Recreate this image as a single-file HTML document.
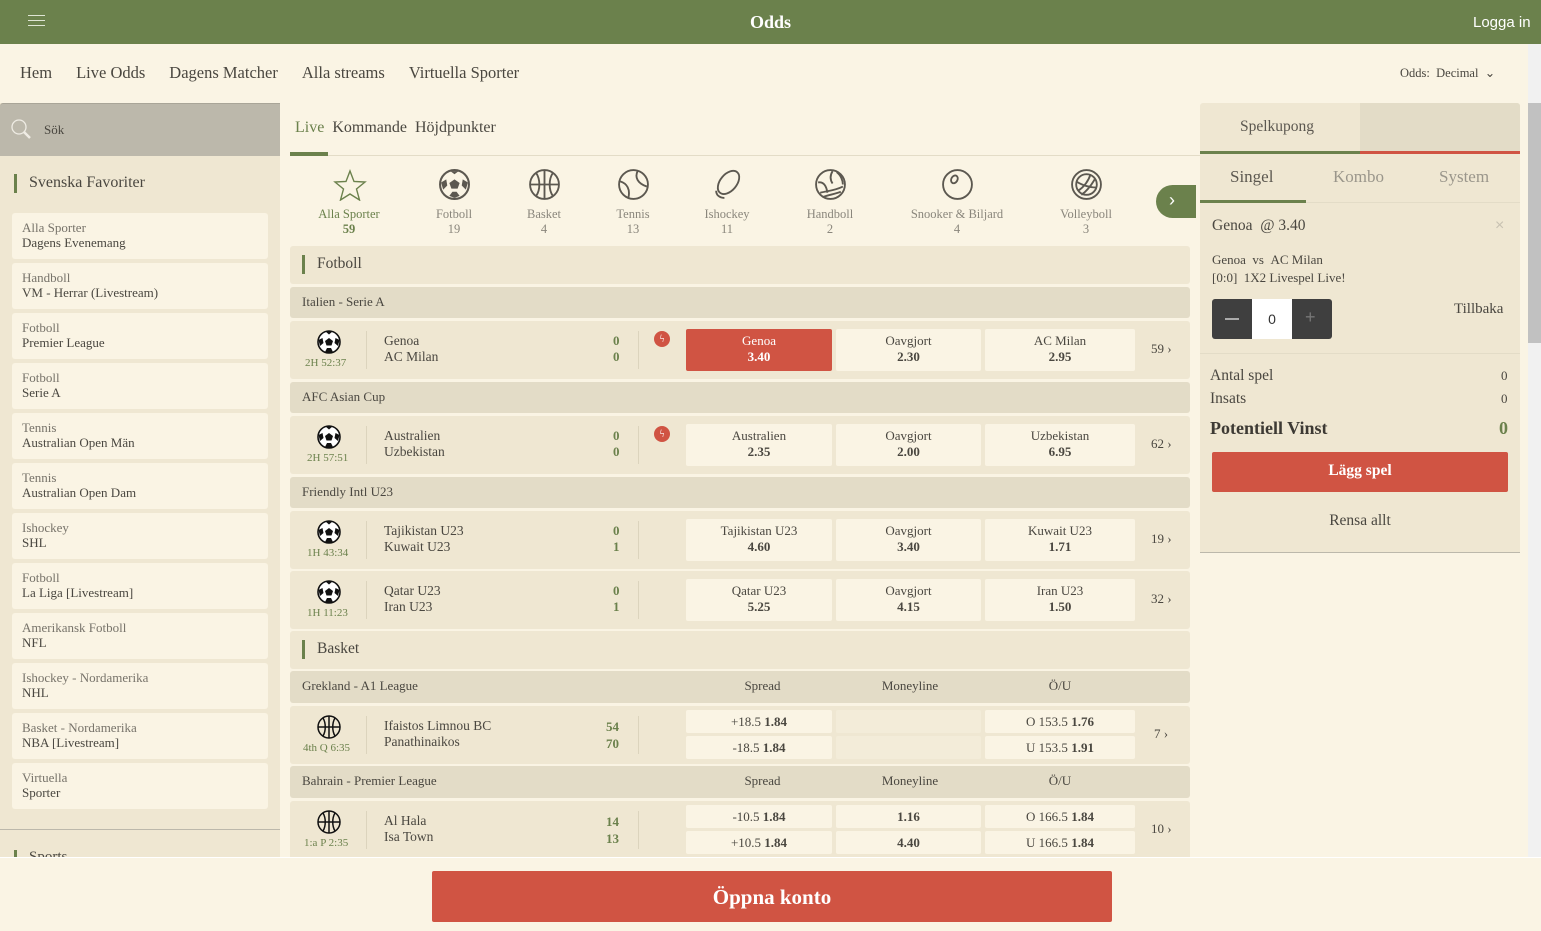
<!DOCTYPE html>
<html><head><meta charset="utf-8"><style>
*{box-sizing:border-box;margin:0;padding:0}
body{width:1541px;height:931px;overflow:hidden;background:#faf4e4;font-family:"Liberation Serif","DejaVu Serif",serif;color:#4a4740;position:relative}
.a{position:absolute}
.hdr{left:0;top:0;width:1541px;height:44px;background:#6b814c}
.nav span{margin-right:24px}
.card{left:12px;width:256px;height:46px;background:#faf4e4;border-radius:3px;padding:7px 10px;font-size:13px;line-height:15px}
.card .t{color:#77736a}
.row{left:290px;width:900px;border-radius:3px}
.sec{background:#efe7d2}
.lg{background:#e3dcc7;font-size:13px;color:#4a4740;padding-left:12px}
.m{background:#efe7d2}
.odd{position:absolute;background:#faf4e4;border-radius:2px;text-align:center;font-size:13px;line-height:16px;color:#4a4740}
.odd b{font-weight:bold}
.sp{text-align:center;font-size:12.5px;color:#8a867c;width:110px}
</style></head><body>
<div class="a hdr"></div>
<div class="a" style="left:28px;top:15px;width:17px;height:11px;border-top:1px solid #dfe5d4;border-bottom:1px solid #dfe5d4"></div>
<div class="a" style="left:28px;top:20px;width:17px;height:1px;background:#dfe5d4"></div>
<div class="a" style="left:0;width:1541px;top:12px;text-align:center;color:#fff;font-weight:bold;font-size:18px">Odds</div>
<div class="a" style="left:1473px;top:14px;color:#fff;font-family:'Liberation Sans',sans-serif;font-size:15px">Logga in</div>
<div class="a nav" style="left:20px;top:63px;font-size:16.5px;color:#4a4740"><span>Hem</span><span>Live Odds</span><span>Dagens Matcher</span><span>Alla streams</span><span>Virtuella Sporter</span></div>
<div class="a" style="left:1400px;top:65px;font-size:12.5px;color:#4a4740">Odds:&nbsp; Decimal &nbsp;⌄</div>

<!-- sidebar -->
<div class="a" style="left:0;top:103px;width:280px;height:760px;background:#efe7d2"></div>
<div class="a" style="left:0;top:103px;width:280px;height:53px;background:#bcb8ab;border-top:1px solid #a9a598;border-radius:3px 0 0 0"></div>
<svg class="a" style="left:11px;top:119px" width="22" height="22" viewBox="0 0 22 22"><circle cx="8" cy="8" r="7" fill="none" stroke="#efece4" stroke-width="1.3"/><path d="M13 13l6 6" stroke="#efece4" stroke-width="2.5"/></svg>
<div class="a" style="left:44px;top:122px;font-size:13px;color:#4a4740">Sök</div>
<div class="a" style="left:14px;top:174px;width:3px;height:19px;background:#6b814c"></div>
<div class="a" style="left:29px;top:174px;font-size:16px">Svenska Favoriter</div>
<div class="a card" style="top:213px"><div class="t">Alla Sporter</div>Dagens Evenemang</div>
<div class="a card" style="top:263px"><div class="t">Handboll</div>VM - Herrar (Livestream)</div>
<div class="a card" style="top:313px"><div class="t">Fotboll</div>Premier League</div>
<div class="a card" style="top:363px"><div class="t">Fotboll</div>Serie A</div>
<div class="a card" style="top:413px"><div class="t">Tennis</div>Australian Open Män</div>
<div class="a card" style="top:463px"><div class="t">Tennis</div>Australian Open Dam</div>
<div class="a card" style="top:513px"><div class="t">Ishockey</div>SHL</div>
<div class="a card" style="top:563px"><div class="t">Fotboll</div>La Liga [Livestream]</div>
<div class="a card" style="top:613px"><div class="t">Amerikansk Fotboll</div>NFL</div>
<div class="a card" style="top:663px"><div class="t">Ishockey - Nordamerika</div>NHL</div>
<div class="a card" style="top:713px"><div class="t">Basket - Nordamerika</div>NBA [Livestream]</div>
<div class="a card" style="top:763px"><div class="t">Virtuella</div>Sporter</div>
<div class="a" style="left:0;top:829px;width:280px;height:1px;background:#bcb8ab"></div>
<div class="a" style="left:14px;top:850px;width:3px;height:10px;background:#6b814c"></div>
<div class="a" style="left:29px;top:849px;font-size:15px">Sports</div>

<!-- center tabs -->
<div class="a" style="left:295px;top:119px;font-size:16px"><span style="color:#6b814c">Live</span>&nbsp; Kommande&nbsp; Höjdpunkter</div>
<div class="a" style="left:290px;top:155px;width:910px;height:1px;background:#e3dcc7"></div>
<div class="a" style="left:290px;top:152px;width:38px;height:4px;background:#6b814c"></div>

<!-- sport icons -->
<svg class="a" style="left:333px;top:169px" width="34" height="32" viewBox="0 0 34 32"><path d="M17 2l4 10.5 11 .5-8.5 7 3 11L17 25l-9.5 6 3-11L2 13l11-.5z" fill="none" stroke="#6b814c" stroke-width="1.4"/></svg>
<div class="a sp" style="left:294px;top:207px;color:#6b814c">Alla Sporter<br><b>59</b></div>
<svg class="a" style="left:438px;top:168px" width="33" height="33" viewBox="0 0 32 32"><circle cx="16" cy="16" r="14" fill="none" stroke="#5c5850" stroke-width="2"/><path d="M16 11l5 3.5-2 5.5h-6l-2-5.5zM3 14l5-3 1 6-4 4zM29 14l-5-3-1 6 4 4zM11 27l3-4h4l3 4-5 2zM12 3l4 3 4-3" fill="#5c5850"/></svg>
<div class="a sp" style="left:399px;top:207px">Fotboll<br>19</div>
<svg class="a" style="left:528px;top:168px" width="33" height="33" viewBox="0 0 32 32"><g fill="none" stroke="#5c5850" stroke-width="1.8"><circle cx="16" cy="16" r="14"/><path d="M16 2v28M2 16h28M8 5c4 6 4 16 0 22M24 5c-4 6-4 16 0 22"/></g></svg>
<div class="a sp" style="left:489px;top:207px">Basket<br>4</div>
<svg class="a" style="left:617px;top:168px" width="33" height="33" viewBox="0 0 32 32"><g fill="none" stroke="#5c5850" stroke-width="1.8"><circle cx="16" cy="16" r="14"/><path d="M20 3c-3 6 0 12 9 15M3 13c7 2 10 8 8 16"/></g></svg>
<div class="a sp" style="left:578px;top:207px">Tennis<br>13</div>
<svg class="a" style="left:711px;top:168px" width="33" height="33" viewBox="0 0 32 32"><g fill="none" stroke="#5c5850" stroke-width="1.8"><ellipse cx="17" cy="14" rx="13" ry="8" transform="rotate(-50 17 14)"/><path d="M5 22c0 4 3 7 8 7"/></g></svg>
<div class="a sp" style="left:672px;top:207px">Ishockey<br>11</div>
<svg class="a" style="left:814px;top:168px" width="33" height="33" viewBox="0 0 32 32"><g fill="none" stroke="#5c5850" stroke-width="1.8"><circle cx="16" cy="16" r="14"/><path d="M6 24c8-2 14-2 22-6M9 28c6-2 12-3 17-5M4 14c5-1 8 3 9 10M18 3c-3 5-2 9 0 12M22 4c4 3 6 8 6 12"/></g></svg>
<div class="a sp" style="left:775px;top:207px">Handboll<br>2</div>
<svg class="a" style="left:941px;top:168px" width="33" height="33" viewBox="0 0 32 32"><g fill="none" stroke="#5c5850" stroke-width="1.8"><circle cx="16" cy="16" r="14"/><ellipse cx="13" cy="11" rx="3" ry="4" transform="rotate(30 13 11)"/></g></svg>
<div class="a sp" style="left:892px;top:207px;width:130px">Snooker &amp; Biljard<br>4</div>
<svg class="a" style="left:1070px;top:168px" width="33" height="33" viewBox="0 0 32 32"><g fill="none" stroke="#5c5850" stroke-width="1.8"><circle cx="16" cy="16" r="14"/><circle cx="16" cy="16" r="10"/><path d="M8 22c6-4 10-10 12-16M11 26c6-4 10-10 13-15M6 13c6 4 14 6 20 6"/></g></svg>
<div class="a sp" style="left:1031px;top:207px">Volleyboll<br>3</div>
<div class="a" style="left:1156px;top:185px;width:40px;height:33px;border-radius:17px 0 0 17px;background:#6b814c;color:#fff;font-size:18px;line-height:31px;padding-left:13px;font-family:'Liberation Sans',sans-serif">›</div>

<!-- rows -->
<div class="a row sec" style="top:246px;height:38px"></div>
<div class="a" style="left:302px;top:255px;width:3px;height:19px;background:#6b814c"></div>
<div class="a" style="left:317px;top:255px;font-size:15.5px">Fotboll</div>
<div class="a row lg" style="top:287px;height:31px;line-height:29px">Italien - Serie A</div>
<div class="a row m" style="top:321px;height:58px"></div>
<div class="a row lg" style="top:382px;height:31px;line-height:29px">AFC Asian Cup</div>
<div class="a row m" style="top:416px;height:58px"></div>
<div class="a row lg" style="top:477px;height:31px;line-height:29px">Friendly Intl U23</div>
<div class="a row m" style="top:511px;height:58px"></div>
<div class="a row m" style="top:571px;height:58px"></div>
<div class="a row sec" style="top:631px;height:38px"></div>
<div class="a" style="left:302px;top:640px;width:3px;height:19px;background:#6b814c"></div>
<div class="a" style="left:317px;top:640px;font-size:15.5px">Basket</div>
<div class="a row lg" style="top:671px;height:32px;line-height:30px">Grekland - A1 League</div>
<div class="a row m" style="top:706px;height:58px"></div>
<div class="a row lg" style="top:766px;height:32px;line-height:30px">Bahrain - Premier League</div>
<div class="a row m" style="top:801px;height:60px"></div>
<div class="a" style="left:740px;top:678px;width:45px;text-align:center;font-size:13px">Spread</div>
<div class="a" style="left:870px;top:678px;width:80px;text-align:center;font-size:13px">Moneyline</div>
<div class="a" style="left:1040px;top:678px;width:40px;text-align:center;font-size:13px">Ö/U</div>
<div class="a" style="left:740px;top:773px;width:45px;text-align:center;font-size:13px">Spread</div>
<div class="a" style="left:870px;top:773px;width:80px;text-align:center;font-size:13px">Moneyline</div>
<div class="a" style="left:1040px;top:773px;width:40px;text-align:center;font-size:13px">Ö/U</div>

<svg width="0" height="0" style="position:absolute"><defs>
<g id="fb"><circle cx="12" cy="12" r="11" fill="#fff" stroke="#111" stroke-width="1.6"/><path d="M12 8l4 3-1.5 4.5h-5L8 11zM1.5 10l4-2 1 5-3.5 3zM22.5 10l-4-2-1 5 3.5 3zM8 22l2-4h4l2 4-4 1.5zM8.5 1.5l3.5 3 3.5-3" fill="#111"/></g>
<g id="bb" fill="none" stroke="#111" stroke-width="1.5"><circle cx="12" cy="12" r="11"/><path d="M12 1v22M1 12h22M6 3c3 5 3 13 0 18M18 3c-3 5-3 13 0 18"/></g>
</defs></svg>

<!-- match 1 -->
<svg class="a" style="left:317px;top:330px" width="24" height="24"><use href="#fb"/></svg>
<div class="a" style="left:305px;top:357px;font-size:11px;color:#6b814c">2H 52:37</div>
<div class="a" style="left:366px;top:331px;width:1px;height:38px;background:#dcd4bd"></div>
<div class="a" style="left:384px;top:333px;font-size:13.5px;line-height:16px">Genoa<br>AC Milan</div>
<div class="a" style="left:613px;top:333px;font-size:13px;line-height:16px;color:#6b814c;font-weight:bold">0<br>0</div>
<div class="a" style="left:638px;top:331px;width:1px;height:38px;background:#dcd4bd"></div>
<div class="a" style="left:654px;top:331px;width:16px;height:16px;border-radius:50%;background:#d05443;color:#fff;font-size:11px;text-align:center;line-height:16px">ϟ</div>
<div class="odd" style="left:686px;top:329px;width:146px;height:42px;padding-top:4px;background:#d05443;color:#fff">Genoa<br><b>3.40</b></div>
<div class="odd" style="left:836px;top:329px;width:145px;height:42px;padding-top:4px">Oavgjort<br><b>2.30</b></div>
<div class="odd" style="left:985px;top:329px;width:150px;height:42px;padding-top:4px">AC Milan<br><b>2.95</b></div>
<div class="a" style="left:1151px;top:341px;font-size:13px">59 ›</div>

<!-- match 2 -->
<svg class="a" style="left:317px;top:425px" width="24" height="24"><use href="#fb"/></svg>
<div class="a" style="left:307px;top:452px;font-size:11px;color:#6b814c">2H 57:51</div>
<div class="a" style="left:366px;top:426px;width:1px;height:38px;background:#dcd4bd"></div>
<div class="a" style="left:384px;top:428px;font-size:13.5px;line-height:16px">Australien<br>Uzbekistan</div>
<div class="a" style="left:613px;top:428px;font-size:13px;line-height:16px;color:#6b814c;font-weight:bold">0<br>0</div>
<div class="a" style="left:638px;top:426px;width:1px;height:38px;background:#dcd4bd"></div>
<div class="a" style="left:654px;top:426px;width:16px;height:16px;border-radius:50%;background:#d05443;color:#fff;font-size:11px;text-align:center;line-height:16px">ϟ</div>
<div class="odd" style="left:686px;top:424px;width:146px;height:42px;padding-top:4px">Australien<br><b>2.35</b></div>
<div class="odd" style="left:836px;top:424px;width:145px;height:42px;padding-top:4px">Oavgjort<br><b>2.00</b></div>
<div class="odd" style="left:985px;top:424px;width:150px;height:42px;padding-top:4px">Uzbekistan<br><b>6.95</b></div>
<div class="a" style="left:1151px;top:436px;font-size:13px">62 ›</div>

<!-- match 3 -->
<svg class="a" style="left:317px;top:520px" width="24" height="24"><use href="#fb"/></svg>
<div class="a" style="left:307px;top:547px;font-size:11px;color:#6b814c">1H 43:34</div>
<div class="a" style="left:366px;top:521px;width:1px;height:38px;background:#dcd4bd"></div>
<div class="a" style="left:384px;top:523px;font-size:13.5px;line-height:16px">Tajikistan U23<br>Kuwait U23</div>
<div class="a" style="left:613px;top:523px;font-size:13px;line-height:16px;color:#6b814c;font-weight:bold">0<br>1</div>
<div class="a" style="left:638px;top:521px;width:1px;height:38px;background:#dcd4bd"></div>
<div class="odd" style="left:686px;top:519px;width:146px;height:42px;padding-top:4px">Tajikistan U23<br><b>4.60</b></div>
<div class="odd" style="left:836px;top:519px;width:145px;height:42px;padding-top:4px">Oavgjort<br><b>3.40</b></div>
<div class="odd" style="left:985px;top:519px;width:150px;height:42px;padding-top:4px">Kuwait U23<br><b>1.71</b></div>
<div class="a" style="left:1151px;top:531px;font-size:13px">19 ›</div>

<!-- match 4 -->
<svg class="a" style="left:317px;top:580px" width="24" height="24"><use href="#fb"/></svg>
<div class="a" style="left:307px;top:607px;font-size:11px;color:#6b814c">1H 11:23</div>
<div class="a" style="left:366px;top:581px;width:1px;height:38px;background:#dcd4bd"></div>
<div class="a" style="left:384px;top:583px;font-size:13.5px;line-height:16px">Qatar U23<br>Iran U23</div>
<div class="a" style="left:613px;top:583px;font-size:13px;line-height:16px;color:#6b814c;font-weight:bold">0<br>1</div>
<div class="a" style="left:638px;top:581px;width:1px;height:38px;background:#dcd4bd"></div>
<div class="odd" style="left:686px;top:579px;width:146px;height:42px;padding-top:4px">Qatar U23<br><b>5.25</b></div>
<div class="odd" style="left:836px;top:579px;width:145px;height:42px;padding-top:4px">Oavgjort<br><b>4.15</b></div>
<div class="odd" style="left:985px;top:579px;width:150px;height:42px;padding-top:4px">Iran U23<br><b>1.50</b></div>
<div class="a" style="left:1151px;top:591px;font-size:13px">32 ›</div>

<!-- basket 1 -->
<svg class="a" style="left:317px;top:715px" width="24" height="24"><use href="#bb"/></svg>
<div class="a" style="left:303px;top:742px;font-size:11px;color:#6b814c">4th Q 6:35</div>
<div class="a" style="left:366px;top:716px;width:1px;height:38px;background:#dcd4bd"></div>
<div class="a" style="left:384px;top:718px;font-size:13.5px;line-height:16px">Ifaistos Limnou BC<br>Panathinaikos</div>
<div class="a" style="left:606px;top:718px;font-size:13px;line-height:17px;color:#6b814c;font-weight:bold">54<br>70</div>
<div class="a" style="left:638px;top:716px;width:1px;height:38px;background:#dcd4bd"></div>
<div class="odd" style="left:686px;top:710px;width:146px;height:23px;line-height:23px">+18.5 <b>1.84</b></div>
<div class="odd" style="left:686px;top:736px;width:146px;height:23px;line-height:23px">-18.5 <b>1.84</b></div>
<div class="odd" style="left:836px;top:710px;width:145px;height:23px;background:#f3ecd9"></div>
<div class="odd" style="left:836px;top:736px;width:145px;height:23px;background:#f3ecd9"></div>
<div class="odd" style="left:985px;top:710px;width:150px;height:23px;line-height:23px">O 153.5 <b>1.76</b></div>
<div class="odd" style="left:985px;top:736px;width:150px;height:23px;line-height:23px">U 153.5 <b>1.91</b></div>
<div class="a" style="left:1154px;top:726px;font-size:13px">7 ›</div>

<!-- basket 2 -->
<svg class="a" style="left:317px;top:810px" width="24" height="24"><use href="#bb"/></svg>
<div class="a" style="left:304px;top:837px;font-size:11px;color:#6b814c">1:a P 2:35</div>
<div class="a" style="left:366px;top:811px;width:1px;height:38px;background:#dcd4bd"></div>
<div class="a" style="left:384px;top:813px;font-size:13.5px;line-height:16px">Al Hala<br>Isa Town</div>
<div class="a" style="left:606px;top:813px;font-size:13px;line-height:17px;color:#6b814c;font-weight:bold">14<br>13</div>
<div class="a" style="left:638px;top:811px;width:1px;height:38px;background:#dcd4bd"></div>
<div class="odd" style="left:686px;top:805px;width:146px;height:23px;line-height:23px">-10.5 <b>1.84</b></div>
<div class="odd" style="left:686px;top:831px;width:146px;height:23px;line-height:23px">+10.5 <b>1.84</b></div>
<div class="odd" style="left:836px;top:805px;width:145px;height:23px;line-height:23px"><b>1.16</b></div>
<div class="odd" style="left:836px;top:831px;width:145px;height:23px;line-height:23px"><b>4.40</b></div>
<div class="odd" style="left:985px;top:805px;width:150px;height:23px;line-height:23px">O 166.5 <b>1.84</b></div>
<div class="odd" style="left:985px;top:831px;width:150px;height:23px;line-height:23px">U 166.5 <b>1.84</b></div>
<div class="a" style="left:1151px;top:821px;font-size:13px">10 ›</div>

<!-- right panel -->
<div class="a" style="left:1200px;top:103px;width:320px;height:450px;background:#efe7d2;border-bottom:1px solid #bcb8ab;border-radius:3px 3px 0 0"></div>
<div class="a" style="left:1360px;top:103px;width:160px;height:48px;background:#e3dcc7;border-radius:0 3px 0 0"></div>
<div class="a" style="left:1200px;top:151px;width:160px;height:3px;background:#6b814c"></div>
<div class="a" style="left:1360px;top:151px;width:160px;height:3px;background:#d05443"></div>
<div class="a" style="left:1240px;top:118px;font-size:15.5px;color:#5c5850">Spelkupong</div>
<div class="a" style="left:1230px;top:167px;font-size:17px;color:#5c5850">Singel</div>
<div class="a" style="left:1333px;top:167px;font-size:17px;color:#9a968b">Kombo</div>
<div class="a" style="left:1439px;top:167px;font-size:17px;color:#9a968b">System</div>
<div class="a" style="left:1200px;top:202px;width:320px;height:1px;background:#e3dcc7"></div>
<div class="a" style="left:1200px;top:200px;width:106px;height:3px;background:#6b814c"></div>
<div class="a" style="left:1212px;top:217px;font-size:15.5px">Genoa &nbsp;@ 3.40</div>
<div class="a" style="left:1495px;top:217px;font-size:16px;color:#c8c2b2;font-family:'Liberation Sans',sans-serif">×</div>
<div class="a" style="left:1212px;top:251px;font-size:13px;line-height:18px">Genoa &nbsp;vs &nbsp;AC Milan<br>[0:0] &nbsp;1X2 Livespel Live!</div>
<div class="a" style="left:1212px;top:299px;width:120px;height:40px;background:#3f3f3f;border-radius:3px"></div>
<div class="a" style="left:1252px;top:299px;width:40px;height:40px;background:#fff;text-align:center;line-height:40px;font-size:14px;font-family:'Liberation Sans',sans-serif;color:#333">0</div>
<div class="a" style="left:1225px;top:318px;width:14px;height:2px;background:#aaa"></div>
<div class="a" style="left:1305px;top:307px;font-size:18px;color:#777;font-family:'Liberation Sans',sans-serif">+</div>
<div class="a" style="left:1454px;top:301px;font-size:15px">Tillbaka</div>
<div class="a" style="left:1200px;top:353px;width:320px;height:1px;background:#e3dcc7"></div>
<div class="a" style="left:1210px;top:364px;font-size:15.5px;line-height:23px">Antal spel<br>Insats</div>
<div class="a" style="left:1501px;top:364px;font-size:13px;line-height:23px">0<br>0</div>
<div class="a" style="left:1210px;top:418px;font-size:18px;font-weight:bold;color:#3d3a34">Potentiell Vinst</div>
<div class="a" style="left:1499px;top:418px;font-size:18px;font-weight:bold;color:#6b814c">0</div>
<div class="a" style="left:1212px;top:452px;width:296px;height:40px;background:#d05443;border-radius:2px;color:#fff;font-weight:bold;font-size:15.5px;text-align:center;line-height:38px">Lägg spel</div>
<div class="a" style="left:1200px;top:512px;width:320px;text-align:center;font-size:15.5px">Rensa allt</div>

<!-- scrollbar -->
<div class="a" style="left:1528px;top:44px;width:13px;height:813px;background:#f1f1f1"></div>
<div class="a" style="left:1528px;top:103px;width:13px;height:240px;background:#c1c1c1"></div>

<!-- bottom -->
<div class="a" style="left:0;top:857px;width:1541px;height:74px;background:#faf4e4;border-top:1px solid #fff"></div>
<div class="a" style="left:432px;top:871px;width:680px;height:51px;background:#d05443;border-radius:2px;color:#fff;font-weight:bold;font-size:21px;text-align:center;line-height:53px">Öppna konto</div>
</body></html>
